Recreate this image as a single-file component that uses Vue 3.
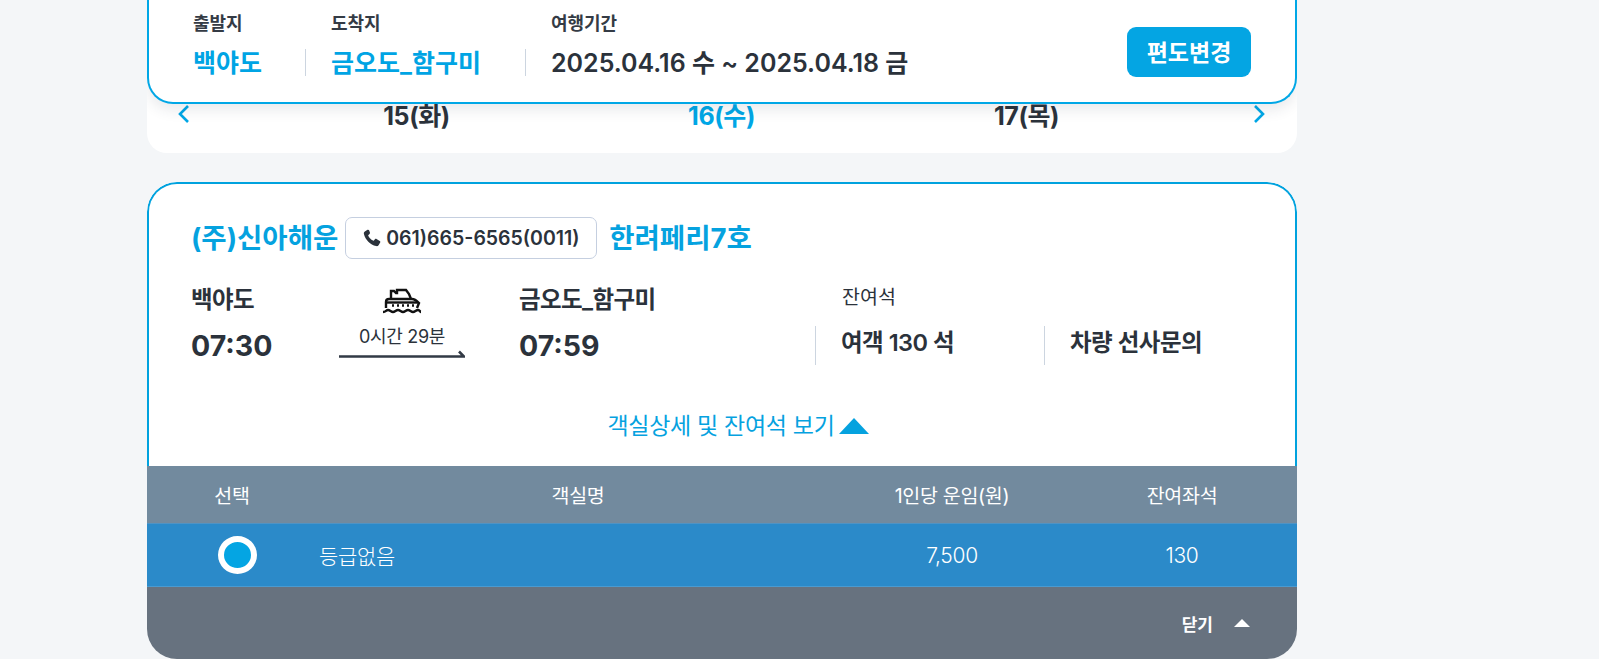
<script setup>
const columns = ['선택', '객실명', '1인당 운임(원)', '잔여좌석']
const days = [
  { label: '15(화)', active: false },
  { label: '16(수)', active: true },
  { label: '17(목)', active: false }
]
</script>

<template>
  <div class="page">
    <section class="search">
      <div class="field from">
        <span class="label">출발지</span>
        <strong class="value">백야도</strong>
      </div>
      <div class="field to">
        <span class="label">도착지</span>
        <strong class="value">금오도_함구미</strong>
      </div>
      <div class="field period">
        <span class="label">여행기간</span>
        <strong class="value dark">2025.04.16 수 ~ 2025.04.18 금</strong>
      </div>
      <button class="change">편도변경</button>
    </section>

    <nav class="days">
      <svg class="chev" width="14" height="20" viewBox="0 0 14 20"><path d="M11 2 3 10l8 8" fill="none" stroke="#00a7e6" stroke-width="2.6"/></svg>
      <div class="day-list">
        <span v-for="d in days" :key="d.label" class="day" :class="{ on: d.active }">{{ d.label }}</span>
      </div>
      <svg class="chev" width="14" height="20" viewBox="0 0 14 20"><path d="M3 2l8 8-8 8" fill="none" stroke="#00a7e6" stroke-width="2.6"/></svg>
    </nav>

    <article class="ticket">
      <div class="body">
        <header class="head">
          <span class="company">(주)신아해운</span>
          <span class="tel">
            <svg width="20" height="20" viewBox="0 0 24 24"><path fill="#2b323b" d="M6.6 2.2 3.4 4.1c-1 .7-1.4 1.8-1.1 3 1.8 7 7.6 12.8 14.6 14.6 1.2.3 2.3-.1 3-1.1l1.9-3.2c.4-.7.2-1.5-.5-1.9l-3.9-2.3c-.6-.4-1.4-.3-1.9.3l-1.2 1.4c-.3.3-.7.4-1.1.2-2.5-1.2-4.5-3.2-5.7-5.7-.2-.4-.1-.8.2-1.1l1.4-1.2c.6-.5.7-1.3.3-1.9L8.5 2.7c-.4-.7-1.2-.9-1.9-.5Z"/></svg>
            061)665-6565(0011)
          </span>
          <span class="ship-name">한려페리7호</span>
        </header>

        <div class="route">
          <div class="stop">
            <span class="port">백야도</span>
            <span class="time">07:30</span>
          </div>
          <div class="voyage">
            <svg width="42" height="27" viewBox="0 0 42 27" fill="none" stroke="#111" stroke-width="2.4">
              <path d="M10 11V3h3l2 2h1V2h9l3 4 2 5"/>
              <path d="M5 20v-6q0-3 3-3h23q3 0 7 4l-2 5"/>
              <path d="M5 14.5h32"/>
              <path d="M11 17.5h2M16 17.5h2M21 17.5h2M26 17.5h2M31 17.5h2"/>
              <path d="M2 24c3 0 3-2 5-2s3 2 5 2 3-2 5-2 3 2 5 2 3-2 5-2 3 2 5 2 3-2 5-2 2 2 3 2"/>
            </svg>
            <span class="dur">0시간 29분</span>
            <svg class="arrow" width="126" height="9" viewBox="0 0 126 9"><path d="M0 7.5h125l-5-5" fill="none" stroke="#323a45" stroke-width="2.6"/></svg>
          </div>
          <div class="stop dest">
            <span class="port">금오도_함구미</span>
            <span class="time">07:59</span>
          </div>
          <div class="seats">
            <span class="seat-title">잔여석</span>
            <div class="seat-row">
              <span class="seat">여객 130 석</span>
              <span class="seat">차량 선사문의</span>
            </div>
          </div>
        </div>

        <div class="toggle">
          <span>객실상세 및 잔여석 보기</span>
          <i class="tri"></i>
        </div>
      </div>

      <div class="grid thead">
        <span v-for="c in columns" :key="c">{{ c }}</span>
      </div>
      <div class="grid tr">
        <span class="radio-cell"><i class="radio"></i></span>
        <span class="left">등급없음</span>
        <span>7,500</span>
        <span>130</span>
      </div>
      <footer class="foot">
        <span>닫기</span>
        <i class="tri small"></i>
      </footer>
    </article>
  </div>
</template>

<style>
html, body { margin: 0; background: #f4f6f8; overflow: hidden; }
</style>

<style scoped>
.page {
  box-sizing: border-box;
  width: 1150px;
  height: 659px;
  margin-left: 147px;
  overflow: hidden;
  font-family: Inter, "Noto Sans CJK KR", sans-serif;
  color: #2b323b;
}
.search {
  position: relative;
  z-index: 1;
  box-sizing: border-box;
  height: 104px;
  display: flex;
  align-items: flex-start;
  padding: 14px 44px 0 44px;
  background: #fff;
  border: 2px solid #00a7e6;
  border-top: 0;
  border-radius: 0 0 26px 26px;
  box-shadow: 0 6px 14px rgba(40, 50, 70, .1);
}
.field { display: flex; flex-direction: column; }
.label { font-size: 18px; font-weight: 600; line-height: 20px; letter-spacing: -.1px; color: #343b45; }
.value {
  margin-top: 11px;
  font-size: 25px;
  line-height: 36px;
  font-weight: 700;
  color: #00a4e4;
  white-space: nowrap;
}
.value.dark { color: #2b323b; font-weight: 600; }
.to, .period { position: relative; }
.to::before, .period::before {
  content: "";
  position: absolute;
  left: -26px;
  top: 35px;
  width: 1px;
  height: 27px;
  background: #ccd5e0;
}
.from { width: 138px; }
.to { width: 220px; }
.period { flex: 1; }
.change {
  margin-top: 13px;
  width: 124px;
  height: 50px;
  border: 0;
  border-radius: 9px;
  background: #04a5e3;
  color: #fff;
  font: 600 23px Inter, "Noto Sans CJK KR", sans-serif;
  white-space: nowrap;
  padding: 0 0 2px;
}
.days {
  box-sizing: border-box;
  height: 79px;
  margin-top: -30px;
  padding: 30px 31px 29px 30px;
  display: flex;
  justify-content: space-between;
  align-items: center;
  background: #fff;
  border-radius: 0 0 20px 20px;
}
.day-list { display: flex; justify-content: center; flex: 1; }
.day {
  width: 305px;
  font-size: 25px;
  font-weight: 700;
  letter-spacing: -.4px;
  text-align: center;
}
.day.on { color: #00a7e6; }
.ticket {
  margin-top: 29px;
  overflow: hidden;
  height: 477px;
  border-radius: 30px;
  background: #fff;
}
.body {
  box-sizing: border-box;
  height: 284px;
  padding: 33px 42px 0 42px;
  border: 2px solid #00a2de;
  border-bottom: 0;
  border-radius: 30px 30px 0 0;
}
.head { display: flex; align-items: center; height: 42px; }
.company, .ship-name {
  font-size: 27.5px;
  font-weight: 700;
  color: #05a2df;
  white-space: nowrap;
  padding-bottom: 4px;
}
.tel {
  box-sizing: border-box;
  display: flex;
  align-items: center;
  gap: 4px;
  width: 252px;
  height: 42px;
  margin: 0 12px 0 7px;
  padding-left: 16px;
  border: 1px solid #c5cfe0;
  border-radius: 7px;
  font-size: 19.5px;
  font-weight: 600;
  color: #2b323b;
  white-space: nowrap;
}
.route { display: flex; margin-top: 24px; }
.route > * { flex: none; }
.stop { display: flex; flex-direction: column; width: 150px; }
.stop.dest { width: 322px; }
.port { font-size: 23.5px; font-weight: 600; line-height: 34px; letter-spacing: -.6px; white-space: nowrap; }
.time { margin-top: 10px; font-size: 28.5px; line-height: 38px; font-weight: 700; }
.voyage {
  width: 126px;
  margin: 0 54px 0 -2px;
  display: flex;
  flex-direction: column;
  align-items: center;
}
.voyage svg:first-child { margin-top: 5px; }
.dur { margin-top: 10px; font-size: 18px; line-height: 24px; letter-spacing: -.3px; white-space: nowrap; }
.arrow { margin-top: 0; }
.seats { margin-left: -26px; }
.seat-title { display: block; padding-left: 27px; font-size: 19.5px; line-height: 28px; }
.seat-row { display: flex; margin-top: 15px; }
.seat {
  box-sizing: border-box;
  flex: none;
  width: 229px;
  height: 39px;
  padding-left: 25px;
  border-left: 1px solid #ccd5e0;
  font-size: 23.5px;
  font-weight: 600;
  line-height: 34px;
  letter-spacing: -.5px;
  white-space: nowrap;
}
.toggle {
  display: flex;
  justify-content: center;
  align-items: center;
  gap: 4px;
  margin: 45px -32px 0 0;
  font-size: 23px;
  line-height: 32px;
  letter-spacing: -.3px;
  color: #05a2df;
}
.tri {
  width: 0;
  height: 0;
  border-left: 15px solid transparent;
  border-right: 15px solid transparent;
  border-bottom: 16px solid #05a2df;
}
.grid {
  box-sizing: border-box;
  display: grid;
  grid-template-columns: 170px 522px 226px 232px;
  align-items: center;
  text-align: center;
  color: #fff;
  font-size: 19.5px;
  font-weight: 400;
  letter-spacing: -.3px;
}
.grid > span:last-child { padding-left: 2px; }
.thead { height: 58px; background: #728a9e; border-bottom: 1px solid #4f93c4; }
.tr { height: 63px; background: #2b8ac9; border-bottom: 1px solid #4a9ad0; font-size: 21px; font-weight: 300; }
.left { text-align: left; padding-left: 2px; letter-spacing: -.3px; }
.radio-cell { display: flex; justify-content: center; padding-left: 10px; }
.radio {
  box-sizing: border-box;
  width: 39px;
  height: 38px;
  border: 6px solid #fff;
  border-radius: 50%;
  background: #04a5e3;
}
.foot {
  height: 72px;
  box-sizing: border-box;
  padding: 0 47px 0 0;
  display: flex;
  justify-content: flex-end;
  align-items: center;
  gap: 21px;
  background: #67727f;
  color: #fff;
  font-size: 17px;
  font-weight: 600;
}
.tri.small {
  border-left-width: 8px;
  border-right-width: 8px;
  border-bottom: 8px solid #fff;
}
</style>
